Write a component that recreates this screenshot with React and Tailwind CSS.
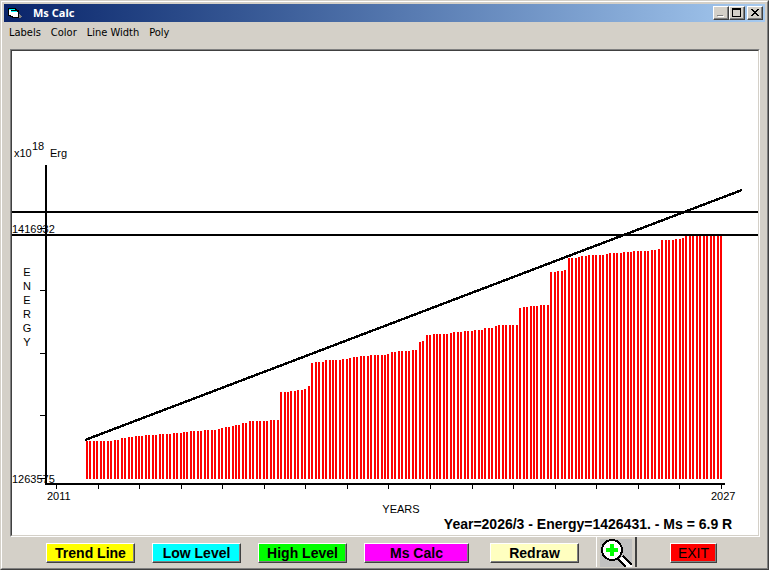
import React, { useState } from 'react';

const BASELINE = 428;
const BAR_COUNT = 184;

// [x, top] pairs: every bar from x on reaches up to top
const LEVELS = [
    [74, 390], [102, 389], [106, 388], [109, 387], [116, 386], [123, 385], [133, 384],
    [147, 383], [160, 382], [171, 381], [178, 380], [192, 379], [205, 378], [209, 377],
    [212, 376], [218, 375], [222, 374], [229, 372], [237, 370], [257, 369], [267, 341],
    [278, 340], [285, 339], [291, 338], [295, 335], [299, 312], [302, 311], [312, 309],
    [329, 308], [336, 307], [340, 306], [347, 305], [357, 304], [374, 303], [378, 301],
    [385, 300], [399, 299], [406, 291], [409, 290], [413, 284], [419, 283], [437, 282],
    [440, 281], [451, 280], [461, 279], [471, 277], [482, 275], [484, 274], [506, 257],
    [509, 256], [516, 255], [527, 254], [537, 221], [544, 220], [551, 219], [554, 207],
    [565, 206], [568, 205], [575, 204], [593, 203], [596, 202], [610, 201], [620, 200],
    [638, 199], [645, 198], [648, 189], [662, 188], [669, 187], [672, 185],
];

const bars = Array.from({ length: BAR_COUNT }, (_, i) => {
    const x = Math.round(74 + i * 3.465);
    const level = LEVELS.filter(([from]) => from <= x).pop();
    return { x, top: level[1] };
});

const yearTicks = Array.from({ length: 17 }, (_, i) => Math.round(44 + i * 41.56));
const energyTicks = [177, 239, 302, 364, 427];

const menus = ['Labels', 'Color', 'Line Width', 'Poly'];

const raised =
    'border border-t-white border-l-white border-r-[#404040] border-b-[#404040] shadow-[inset_-1px_-1px_0_#808080]';

const AppIcon = () => (
    <svg width="14" height="12" viewBox="0 0 14 12" shapeRendering="crispEdges" aria-hidden="true">
        <path d="M0 1h8v1h1v1h2v8H4v-1H2V9H0z" fill="#000" />
        <path d="M1 3h2v5H1zM3 5h7v5H5V9H3z" fill="#fff" />
        <path d="M1 2h6v1H1zM3 4h6v1H3z" fill="#0ff" />
        <path d="M11 7h1v1h1v1h1v1h-1v1h-2z" fill="#808080" />
    </svg>
);

const CaptionButton = ({ label, children }) => (
    <button
        type="button"
        aria-label={label}
        className={`flex h-[14px] w-4 items-center justify-center bg-[#d4d0c8] text-black ${raised}`}
    >
        <svg width="12" height="10" viewBox="0 0 12 10" shapeRendering="crispEdges" aria-hidden="true">
            {children}
        </svg>
    </button>
);

const TitleBar = () => (
    <header className="flex h-[18px] items-center bg-linear-to-r from-[#0a246a] to-[#a6caf0] pr-[2px] pl-1">
        <AppIcon />
        <h1 className="ml-[11px] flex-1 font-['Noto_Sans'] text-[11px] leading-4 font-bold text-white">Ms Calc</h1>
        <div className="flex">
            <CaptionButton label="Minimize">
                <path d="M3 8h6v1H3z" fill="#fff" />
                <path d="M2 7h6v1H2z" fill="#808080" />
            </CaptionButton>
            <CaptionButton label="Maximize">
                <path d="M1 0h9v9H1zM2 2v6h7V2z" fillRule="evenodd" fill="#000" />
            </CaptionButton>
        </div>
        <div className="ml-[2px]">
            <CaptionButton label="Close">
                <path
                    d="M2 1h2v1h1v1h2V2h1V1h2v1H9v1H8v1H7v1h1v1h1v1h1v1H8V7H7V6H5v1H4v1H2V7h1V6h1V5h1V4H4V3H3V2H2z"
                    fill="#000"
                />
            </CaptionButton>
        </div>
    </header>
);

const Chart = ({ title }) => (
    <svg viewBox="0 0 746 484" className="block h-auto w-full bg-white" role="img" aria-label={title}>
        <g shapeRendering="crispEdges">
            {bars.map((bar) => (
                <rect key={bar.x} x={bar.x} y={bar.top} width="2" height={BASELINE - bar.top} fill="#ff0000" />
            ))}
            <rect x="33" y="114" width="2" height="320" />
            <rect x="33" y="432" width="680" height="2" />
            {yearTicks.map((x) => (
                <rect key={x} x={x} y="434" width="1" height="4" />
            ))}
            {energyTicks.map((y) => (
                <rect key={y} x="28" y={y} width="5" height="1" />
            ))}
            {/* high and low level */}
            <rect x="0" y="160" width="746" height="2" />
            <rect x="0" y="183" width="746" height="2" />
            {/* trend */}
            <line x1="73" y1="389" x2="730" y2="139" stroke="#000" strokeWidth="2.4" />
        </g>

        <g className="font-['Liberation_Sans',sans-serif] text-[11px]">
            <text x="2" y="106">x10</text>
            <text x="20" y="99">18</text>
            <text x="38" y="106">Erg</text>
            <text x="0" y="182">1416932</text>
            <text x="0" y="432">1263575</text>
            <text x="35" y="449">2011</text>
            <text x="699" y="449">2027</text>
            <text x="389" y="462" textAnchor="middle">YEARS</text>
            {'ENERGY'.split('').map((letter, i) => (
                <text key={i} x="15" y={225 + i * 14} textAnchor="middle">
                    {letter}
                </text>
            ))}
        </g>
        <text
            x="576"
            y="478"
            textAnchor="middle"
            className="font-['Liberation_Sans',sans-serif] text-[14px] font-bold"
        >
            Year=2026/3 - Energy=1426431. - Ms = 6.9 R
        </text>
    </svg>
);

const ActionButton = ({ className, children }) => (
    <button
        type="button"
        className={`h-5 font-['Liberation_Sans',sans-serif] text-[14px] leading-4 whitespace-nowrap text-black ${raised} ${className}`}
    >
        {children}
    </button>
);

const ZoomIcon = () => (
    <svg width="32" height="28" viewBox="0 0 32 28" shapeRendering="crispEdges" aria-hidden="true">
        <path d="M19 20l3-3h2l8 8v3h-6z" fill="#fff" />
        <path d="M23 17l9 9M18 20l8 8" fill="none" stroke="#000" strokeWidth="2" />
        <circle cx="12" cy="11" r="10" fill="#fff" stroke="#000" strokeWidth="2" />
        <path d="M10 5h4v4h4v4h-4v4h-4v-4H6V9h4z" fill="#00ff00" />
    </svg>
);

const App = () => {
    const [zoomed, setZoomed] = useState(false);

    return (
        <div className="border border-t-[#d4d0c8] border-r-[#404040] border-b-[#404040] border-l-[#d4d0c8] bg-[#d4d0c8] text-black">
            <div className="border border-t-white border-r-[#808080] border-b-[#808080] border-l-white px-[2px] pt-[2px]">
                <TitleBar />

                <nav className="flex h-[27px] items-start gap-[10px] px-[5px] pt-[3px] font-['DejaVu_Sans_Condensed','Roboto',sans-serif] text-[11px] leading-4">
                    {menus.map((menu) => (
                        <button key={menu} type="button">
                            {menu}
                        </button>
                    ))}
                </nav>

                <main className="mr-[5px] ml-[6px] border border-t-[#808080] border-r-white border-b-white border-l-[#808080]">
                    <div className="border border-t-[#404040] border-r-[#d4d0c8] border-b-[#d4d0c8] border-l-[#404040]">
                        <Chart title="Energy by year" />
                    </div>
                </main>

                <footer className="flex h-[31px] items-start pl-[42px]">
                    <div className="flex gap-[17px] pt-[6px] font-bold">
                        <ActionButton className="w-[89px] bg-[#ffff00]">Trend Line</ActionButton>
                        <ActionButton className="w-[89px] bg-[#00ffff]">Low Level</ActionButton>
                        <ActionButton className="w-[89px] bg-[#00ff00]">High Level</ActionButton>
                        <ActionButton className="w-[105px] bg-[#ff00ff]">Ms Calc</ActionButton>
                    </div>
                    <div className="ml-[21px] flex pt-[6px] font-bold">
                        <ActionButton className="w-[89px] bg-[#ffffc0]">Redraw</ActionButton>
                    </div>
                    <button
                        type="button"
                        aria-label="Zoom in"
                        aria-pressed={zoomed}
                        onClick={() => setZoomed(!zoomed)}
                        className="ml-[17px] flex h-[30px] w-[41px] items-end border-r-2 border-l border-r-[#404040] border-l-white pl-[3px]"
                    >
                        <span className="bg-[#c0c0c0]">
                            <ZoomIcon />
                        </span>
                    </button>
                    <div className="ml-[33px] flex pt-[6px]">
                        <ActionButton className="w-[47px] bg-[#ff0000] font-medium">EXIT</ActionButton>
                    </div>
                </footer>
            </div>
        </div>
    );
};

export default App;
